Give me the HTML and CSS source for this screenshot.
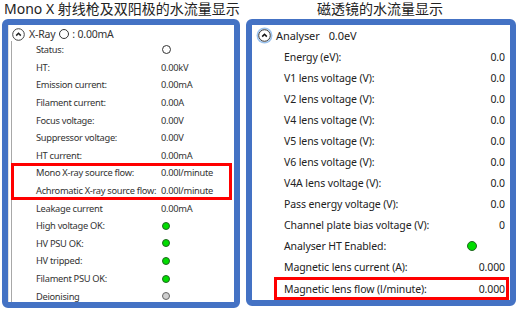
FILE: index.html
```html
<!DOCTYPE html>
<html lang="en">
<head>
<meta charset="UTF-8">
<meta name="viewport" content="width=device-width, initial-scale=1.0">
<title>Water flow displays</title>
<link rel="stylesheet" href="styles.css">
</head>
<body>

<div class="page">
  <div class="titles">
    <div class="title title-left">Mono X 射线枪及双阳极的水流量显示</div>
    <div class="title title-right">磁透镜的水流量显示</div>
  </div>

  <div class="panels">
    <!-- X-ray source panel -->
    <div class="panel panel-xray">
      <div class="xray-inner">
        <div class="xray-head">
          <span class="toggle"><svg width="13" height="13" viewBox="0 0 13 13"><circle cx="6.5" cy="6.5" r="5.8" fill="#fff" stroke="#444" stroke-width="1"/><path d="M4.2 7.6 L6.5 5.3 L8.8 7.6" fill="none" stroke="#222" stroke-width="1.5"/></svg></span>
          <span>X-Ray</span>
          <span class="dot dot-empty dot-small"></span>
          <span>: 0.00mA</span>
        </div>
        <div class="xray-rows">
          <div class="xrow"><span class="lbl">Status:</span><span class="val"><span class="dot dot-empty"></span></span></div>
          <div class="xrow"><span class="lbl">HT:</span><span class="val">0.00kV</span></div>
          <div class="xrow"><span class="lbl">Emission current:</span><span class="val">0.00mA</span></div>
          <div class="xrow"><span class="lbl">Filament current:</span><span class="val">0.00A</span></div>
          <div class="xrow"><span class="lbl">Focus voltage:</span><span class="val">0.00V</span></div>
          <div class="xrow"><span class="lbl">Suppressor voltage:</span><span class="val">0.00V</span></div>
          <div class="xrow"><span class="lbl">HT current:</span><span class="val">0.00mA</span></div>
          <div class="highlight">
            <div class="xrow"><span class="lbl">Mono X-ray source flow:</span><span class="val">0.00l/minute</span></div>
            <div class="xrow"><span class="lbl">Achromatic X-ray source flow:</span><span class="val">0.00l/minute</span></div>
          </div>
          <div class="xrow"><span class="lbl">Leakage current</span><span class="val">0.00mA</span></div>
          <div class="xrow"><span class="lbl">High voltage OK:</span><span class="val"><span class="dot dot-green"></span></span></div>
          <div class="xrow"><span class="lbl">HV PSU OK:</span><span class="val"><span class="dot dot-green"></span></span></div>
          <div class="xrow"><span class="lbl">HV tripped:</span><span class="val"><span class="dot dot-green"></span></span></div>
          <div class="xrow"><span class="lbl">Filament PSU OK:</span><span class="val"><span class="dot dot-green"></span></span></div>
          <div class="xrow"><span class="lbl">Deionising</span><span class="val"><span class="dot dot-grey"></span></span></div>
        </div>
      </div>
    </div>

    <!-- Analyser panel -->
    <div class="panel panel-analyser">
      <div class="an-head">
        <span class="toggle toggle-focus"><svg width="13" height="13" viewBox="0 0 13 13"><circle cx="6.5" cy="6.5" r="5.8" fill="#fff" stroke="#333" stroke-width="1"/><path d="M4.2 7.6 L6.5 5.3 L8.8 7.6" fill="none" stroke="#111" stroke-width="1.6"/></svg></span>
        <span class="an-name">Analyser</span>
        <span>0.0eV</span>
      </div>
      <div class="arow"><span>Energy (eV):</span><span>0.0</span></div>
      <div class="arow"><span>V1 lens voltage (V):</span><span>0.0</span></div>
      <div class="arow"><span>V2 lens voltage (V):</span><span>0.0</span></div>
      <div class="arow"><span>V4 lens voltage (V):</span><span>0.0</span></div>
      <div class="arow"><span>V5 lens voltage (V):</span><span>0.0</span></div>
      <div class="arow"><span>V6 lens voltage (V):</span><span>0.0</span></div>
      <div class="arow"><span>V4A lens voltage (V):</span><span>0.0</span></div>
      <div class="arow"><span>Pass energy voltage (V):</span><span>0.0</span></div>
      <div class="arow"><span>Channel plate bias voltage (V):</span><span>0</span></div>
      <div class="arow"><span>Analyser HT Enabled:</span><span class="an-dot"><span class="dot dot-green dot-big"></span></span></div>
      <div class="arow"><span>Magnetic lens current (A):</span><span>0.000</span></div>
      <div class="arow highlight-row"><span>Magnetic lens flow (l/minute):</span><span>0.000</span></div>
    </div>
  </div>
</div>

</body>
</html>
```

FILE: styles.css
```css
body {
  margin: 0;
  padding: 0;
  background-color: #fff;
  font-family: "Noto Sans", "Open Sans", sans-serif;
  color: #222;
}
.page {
  width: 518px;
  height: 310px;
  overflow: hidden;
}
.titles {
  display: flex;
  height: 19px;
  font-family: "Noto Sans", "Noto Sans CJK SC", sans-serif;
  font-size: 14px;
  line-height: 17px;
  color: #222;
}
.title-left {
  width: 246px;
  padding-left: 4px;
  box-sizing: border-box;
}
.title-right {
  flex: 1;
  text-align: center;
  padding-right: 4px;
}
.panels {
  display: flex;
  gap: 6px;
  padding-left: 2px;
}
.panel {
  border: 6px solid #4472c4;
  border-radius: 6px;
  background-color: #fff;
  box-sizing: border-box;
  overflow: hidden;
}
.panel-xray {
  width: 238px;
  height: 289px;
}
.panel-analyser {
  width: 270px;
  height: 287px;
}

/* left panel */
.xray-inner {
  height: 100%;
  border-left: 1px solid #e2e2e2;
  font-size: 9.3px;
  letter-spacing: -0.3px;
  color: #333;
}
.xray-head {
  display: flex;
  align-items: center;
  gap: 3px;
  height: 14px;
  padding-top: 2px;
  padding-left: 3px;
  font-size: 10.5px;
  letter-spacing: -0.2px;
}
.toggle {
  display: inline-flex;
  width: 13px;
  height: 13px;
  margin-right: 1px;
}
.xray-rows {
  margin-left: 2px;
  border-left: 1px solid #a8a8a8;
}
.xrow {
  display: flex;
  align-items: center;
  height: 17.6px;
  padding-left: 24px;
}
.xrow .lbl {
  width: 124px;
  flex-shrink: 0;
  white-space: nowrap;
}
.xrow .val {
  display: flex;
  align-items: center;
  padding-left: 1px;
  white-space: nowrap;
}
.highlight {
  outline: 3px solid #ff0000;
  outline-offset: -2px;
  margin-right: 3px;
}
.dot {
  display: inline-block;
  width: 8px;
  height: 8px;
  border-radius: 50%;
  box-sizing: border-box;
  margin-left: 1px;
}
.dot-empty {
  width: 9px;
  height: 9px;
  border: 1px solid #333;
  background-color: #fff;
}
.dot-small {
  width: 10px;
  height: 10px;
}
.dot-green {
  background-color: #00dd00;
  border: 1px solid #226622;
}
.dot-grey {
  background-color: #cfcfcf;
  border: 1px solid #666;
}
.dot-big {
  width: 10px;
  height: 10px;
}

/* right panel */
.panel-analyser {
  font-size: 10.5px;
  letter-spacing: -0.1px;
  color: #222;
}
.an-head {
  display: flex;
  align-items: center;
  height: 21px;
  padding-left: 6px;
  padding-top: 0px;
  font-size: 11px;
}
.toggle-focus {
  border-radius: 50%;
  box-shadow: 0 0 0 1.5px #9cc3ee;
  margin-right: 5px;
}
.an-name {
  margin-right: 9px;
}
.arow {
  display: flex;
  justify-content: space-between;
  align-items: center;
  height: 21.1px;
  padding-left: 32px;
  padding-right: 5px;
  white-space: nowrap;
}
.an-dot {
  display: flex;
  align-items: center;
  padding-right: 28px;
}
.highlight-row {
  outline: 3px solid #ff0000;
  outline-offset: -2px;
  margin-left: 23px;
  margin-right: 2px;
  padding-left: 9px;
  padding-right: 3px;
}
```
